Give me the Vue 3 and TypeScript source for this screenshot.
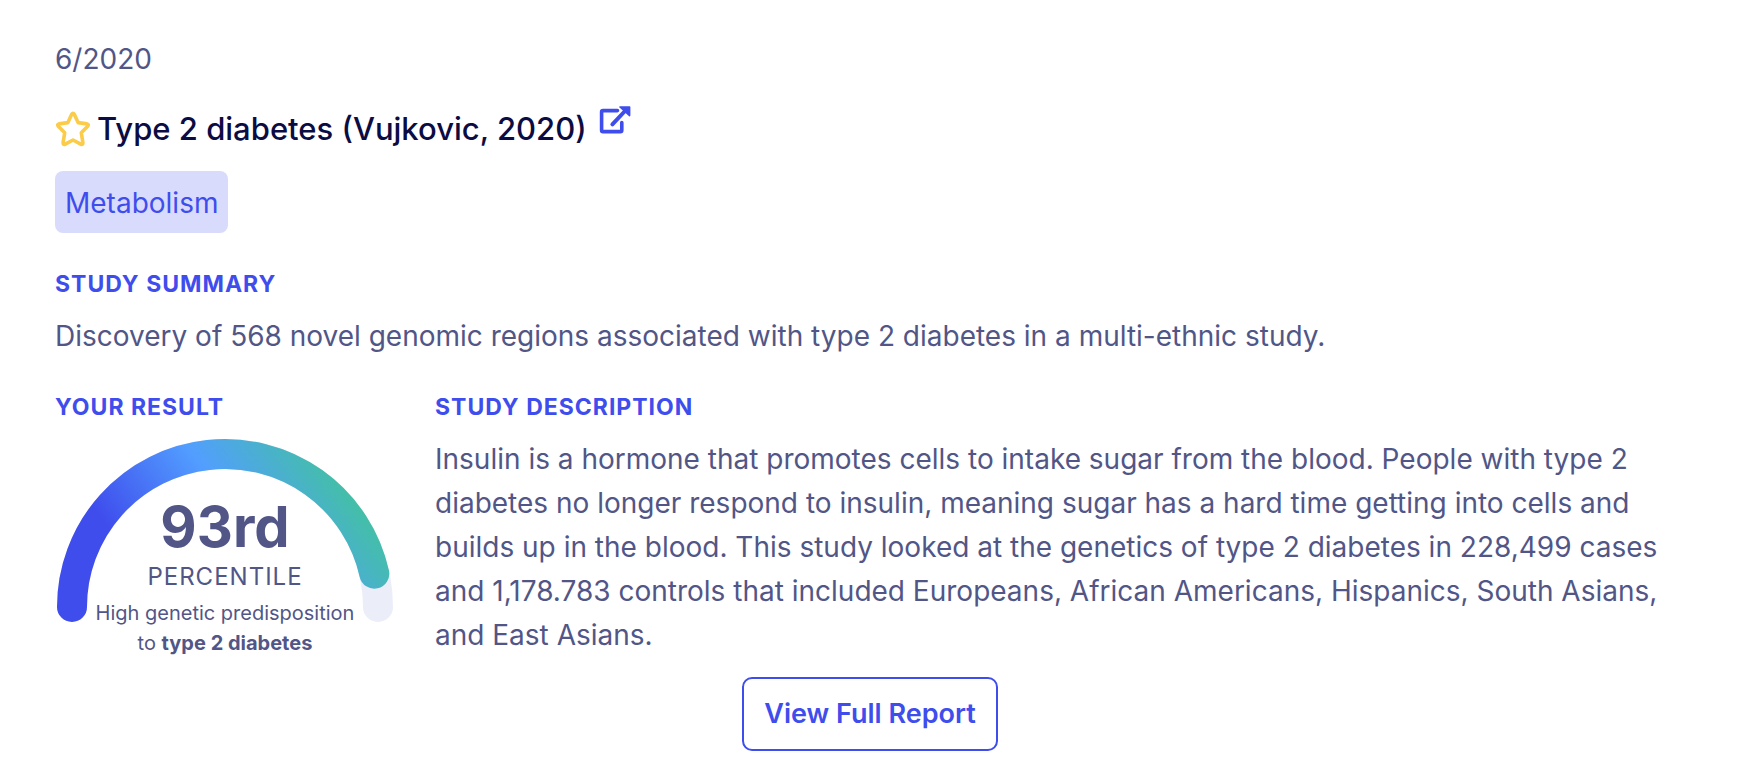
<script setup lang="ts">
import { computed, ref } from 'vue'

const percentile = 93
const favorite = ref(false)

const radius = 153
const center = { x: 170, y: 170 }
const arcEnd = computed(() => {
  const angle = Math.PI * (1 - percentile / 100)
  return {
    x: (center.x + radius * Math.cos(angle)).toFixed(1),
    y: (center.y - radius * Math.sin(angle)).toFixed(1),
  }
})
const trackPath = `M ${center.x - radius} ${center.y} A ${radius} ${radius} 0 0 1 ${center.x + radius} ${center.y}`
const valuePath = computed(
  () => `M ${center.x - radius} ${center.y} A ${radius} ${radius} 0 0 1 ${arcEnd.value.x} ${arcEnd.value.y}`,
)
</script>

<template>
  <main class="study">
    <p class="date">6/2020</p>

    <header class="title-row">
      <button class="star" type="button" aria-label="Favorite this study" :aria-pressed="favorite" @click="favorite = !favorite">
        <svg viewBox="0 0 36 36" width="36" height="36" :fill="favorite ? '#fbcb4a' : 'none'" stroke="#fbcb4a" stroke-width="3.6" stroke-linejoin="round">
          <path d="M16.6 3.4 Q18 1.2 19.4 3.4 L23.1 11.6 L32 12.9 Q34.2 13.5 32.7 15.3 L26.3 21.8 L27.9 31.6 Q28 34.2 25.7 33.1 L18 29 L10.3 33.1 Q8 34.2 8.1 31.6 L9.7 21.8 L3.3 15.3 Q1.8 13.5 4 12.9 L12.9 11.6 Z" />
        </svg>
      </button>
      <h1>Type 2 diabetes (Vujkovic, 2020)</h1>
      <a class="external" href="#study" aria-label="Open the study">
        <svg viewBox="0 0 33 30" width="33" height="30" fill="none" stroke="#3f4ded" stroke-width="3.6" stroke-linecap="round" stroke-linejoin="round">
          <path d="M18.5 5.6 H4 Q2.6 5.6 2.6 7 V25.2 Q2.6 26.6 4 26.6 H21.4 Q22.8 26.6 22.8 25.2 V17.5" />
          <path d="M13.4 19.4 L26 6" stroke-width="4" />
          <path d="M21 2 H30.6 V10.6 Z" fill="#3f4ded" stroke-width="1.6" />
        </svg>
      </a>
    </header>

    <span class="tag">Metabolism</span>

    <section class="summary">
      <h2>STUDY SUMMARY</h2>
      <p>Discovery of 568 novel genomic regions associated with type 2 diabetes in a multi-ethnic study.</p>
    </section>

    <div class="details">
      <section class="result">
        <h2>YOUR RESULT</h2>
        <div class="gauge">
          <svg class="arc" viewBox="0 0 340 188" fill="none" stroke-width="30" stroke-linecap="round" aria-hidden="true">
            <defs>
              <linearGradient id="arc-gradient" gradientUnits="userSpaceOnUse" x1="45" y1="79" x2="223" y2="-50">
                <stop offset="0" stop-color="#3f4ded" />
                <stop offset="0.51" stop-color="#529eff" />
                <stop offset="1" stop-color="#43c0a4" />
              </linearGradient>
            </defs>
            <path :d="trackPath" stroke="#ebedf9" />
            <path :d="valuePath" stroke="url(#arc-gradient)" />
          </svg>
          <div class="reading">
            <strong class="value">{{ percentile }}rd</strong>
            <span class="unit">PERCENTILE</span>
            <p class="note">High genetic predisposition<br />to <b>type 2 diabetes</b></p>
          </div>
        </div>
      </section>

      <section class="description">
        <h2>STUDY DESCRIPTION</h2>
        <p>
          Insulin is a hormone that promotes cells to intake sugar from the blood. People with type 2
          diabetes no longer respond to insulin, meaning sugar has a hard time getting into cells and
          builds up in the blood. This study looked at the genetics of type 2 diabetes in 228,499 cases
          and 1,178.783 controls that included Europeans, African Americans, Hispanics, South Asians,
          and East Asians.
        </p>
      </section>
    </div>

    <button class="report" type="button">View Full Report</button>
  </main>
</template>

<style>
body {
  margin: 0;
  background: #fff;
}
</style>

<style scoped>
.study {
  display: flex;
  flex-direction: column;
  align-items: flex-start;
  box-sizing: border-box;
  padding: 37px 64px 20px 55px;
  color: #515687;
  font-family: Inter, "Open Sans", sans-serif;
  font-size: 28px;
  line-height: 44px;
}

h1,
h2,
p {
  margin: 0;
}

.title-row {
  display: flex;
  align-items: center;
  margin-top: 24px;
}

h1 {
  margin-left: 6px;
  color: #0b0c43;
  font-size: 31px;
  font-weight: 500;
  line-height: 48px;
}

h2 {
  color: #3f4ded;
  font-size: 23px;
  font-weight: 700;
  line-height: 36px;
  letter-spacing: 1px;
}

.star {
  display: flex;
  padding: 0;
  border: 0;
  background: none;
  cursor: pointer;
}

.external {
  display: flex;
  align-self: flex-start;
  margin-left: 12px;
}

.tag {
  margin-top: 18px;
  padding: 10px 10px 8px;
  border-radius: 8px;
  background: #d9dbfd;
  color: #3f4ded;
}

.summary {
  margin-top: 33px;
}

.summary p,
.description p {
  margin-top: 12px;
}

.details {
  display: flex;
  align-self: stretch;
  gap: 40px;
  margin-top: 31px;
}

.result {
  flex: none;
  width: 340px;
}

.description {
  flex: 1;
}

.gauge {
  display: grid;
  justify-items: center;
  margin-top: 12px;
}

.arc {
  grid-area: 1 / 1;
  width: 100%;
}

.reading {
  display: flex;
  grid-area: 1 / 1;
  flex-direction: column;
  align-items: center;
  padding-top: 58px;
  text-align: center;
}

.value {
  font-size: 56px;
  font-weight: 700;
  line-height: 64px;
}

.unit {
  font-size: 24px;
  line-height: 36px;
  letter-spacing: 1px;
}

.note {
  margin-top: 3px;
  font-size: 20px;
  line-height: 30px;
}

.report {
  align-self: center;
  margin-top: 19px;
  padding: 13px 20px;
  border: 2px solid #3f4ded;
  border-radius: 10px;
  background: #fff;
  color: #3f4ded;
  font: inherit;
  font-size: 27px;
  font-weight: 600;
  cursor: pointer;
}
</style>
